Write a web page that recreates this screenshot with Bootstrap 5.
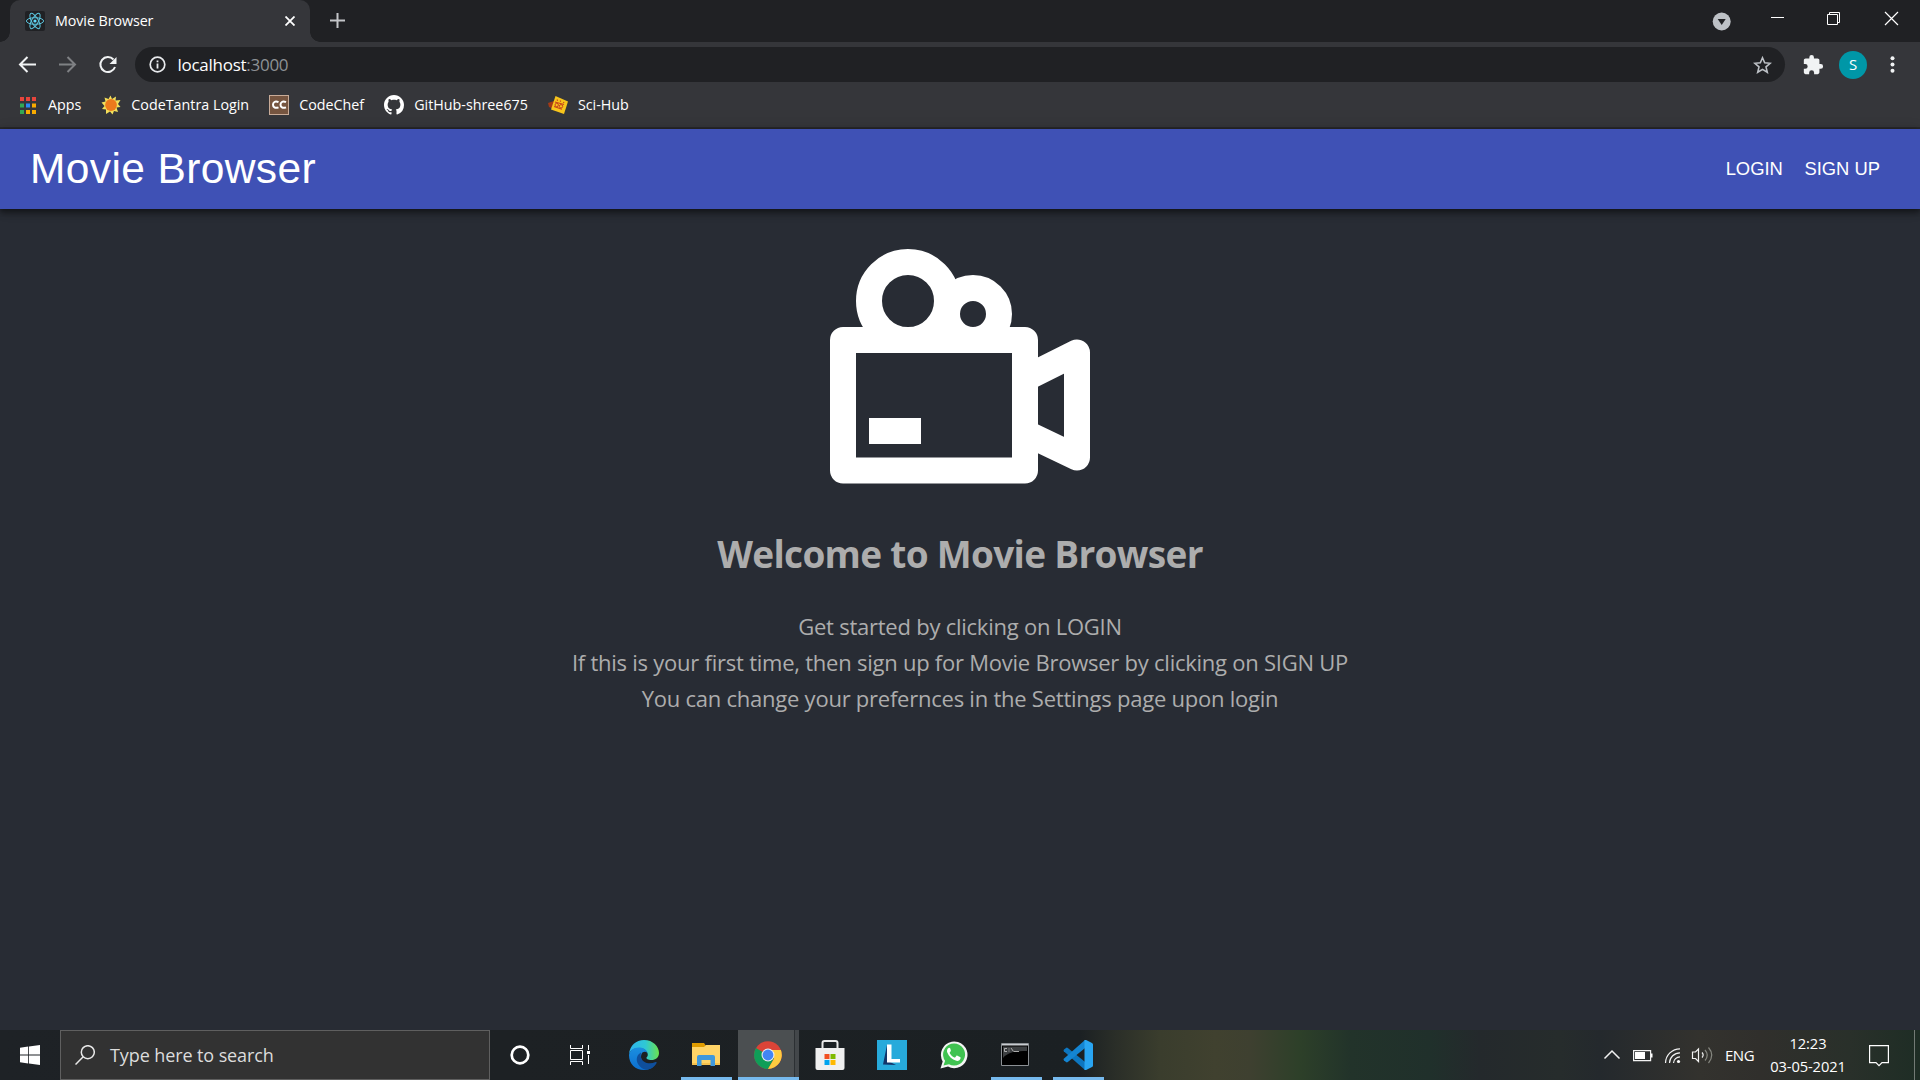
<!DOCTYPE html>
<html lang="en">
<head>
<meta charset="utf-8">
<title>Movie Browser</title>
<link href="https://cdn.jsdelivr.net/npm/bootstrap@5.3.0/dist/css/bootstrap.min.css" rel="stylesheet">
<style>
  body{width:1920px;height:1080px;overflow:hidden;background:#282c34;font-family:"Open Sans","Noto Sans",sans-serif;color:#fff}
  svg{display:block;flex:none}
  .tabstrip{height:42px;background:#202124}
  .browser-tab{width:300px;height:42px;margin-left:10px;background:#35363a;border-radius:10px 10px 0 0;padding:0 15px;position:relative}
  .browser-tab::before,.browser-tab::after{content:"";position:absolute;bottom:0;width:10px;height:10px}
  .browser-tab::before{left:-10px;background:radial-gradient(circle at 0 0,transparent 9.5px,#35363a 10px)}
  .browser-tab::after{right:-10px;background:radial-gradient(circle at 100% 0,transparent 9.5px,#35363a 10px)}
  .newtab{margin:13px 0 0 20px}
  .t-tab,.t-bm{font-size:14.3px;line-height:20px;white-space:nowrap}
  .t-tab{margin-left:10px;letter-spacing:-.08px}
  .toolbar{height:45px;background:#35363a}
  .omnibox{width:1650px;height:35px;border-radius:18px;background:#202124;padding:0 13px 0 14px}
  .t-url{font-size:17px;letter-spacing:-.27px;line-height:24px;white-space:nowrap;margin-left:11.5px}
  .t-url span{color:#8d9195}
  .bookmarks{height:42px;background:#35363a;border-bottom:2px solid #29292c;padding:0 0 4px 20px;gap:20px}
  .bm{gap:10px}
  .bm:first-child{gap:11px}
  .profile{width:28px;height:28px;background:#0097a7;font-size:15px;margin:0 23px 0 15px}
  .appbar{height:80px;background:#3f51b5;box-shadow:0 2px 5px rgba(0,0,0,.35),0 5px 6px rgba(0,0,0,.2),0 1px 12px rgba(0,0,0,.2);font-family:"Liberation Sans",Arial,sans-serif;padding:0 40px 0 30px}
  .brand{font-size:42.5px;letter-spacing:.38px;line-height:52px;white-space:nowrap;padding-bottom:1px}
  .links{gap:21.5px}
  .applink{font-size:18.4px;line-height:28px;white-space:nowrap}
  .page{height:821px;color:#adadad;padding-top:39.5px}
  .welcome{font-size:37px;font-weight:700;line-height:50px;letter-spacing:-.69px;margin:45px 0 0}
  .intro{font-size:22px;line-height:36px;letter-spacing:-.24px;margin:29.5px 0 0}
  .intro div,.welcome{white-space:nowrap}
  .taskbar{height:50px;background:linear-gradient(90deg,#1e2226 0,#1d2124 500px,#1b2023 1080px,#2a2e28 1115px,#3a3d2d 1160px,#40412f 1215px,#3e4030 1250px,#2d4029 1300px,#22332a 1350px,#20302b 1430px,#24292c 1480px,#262c2c 1560px,#24292d 1600px,#33322e 1700px,#302f2c 1760px,#29302a 1850px,#1e2d25 1920px)}
  .startbtn{width:60px}
  .searchbox{width:430px;height:50px;background:#323232;border:1px solid #5f5f5f;padding-left:14px;gap:15px}
  .t-search{font-size:18px;letter-spacing:-.1px;line-height:26px;color:#dcdcdc;white-space:nowrap}
  .slot{width:62px;height:50px;display:flex;align-items:center;justify-content:center;position:relative}
  .slot-sm{width:60px}
  .running::after{content:"";position:absolute;left:6px;bottom:0;width:51px;height:3px;background:#76b9ed}
  .active-app{background:linear-gradient(90deg,transparent 1px,#4b4f51 1px 57px,#2c3033 57px 58px,#43474a 58px)}
  .active-app.running::after{left:1px;width:61px}
  .t-lang{font-size:15px;line-height:23px;letter-spacing:-.5px;width:42px}
  .t-clock{font-size:14.7px;line-height:23px;letter-spacing:-.1px;width:82px;white-space:nowrap;text-align:center}
  .peek{width:6px;height:50px;border-left:1px solid #727a75}
</style>
</head>
<body>
<header>
  <div class="tabstrip d-flex">
    <div class="browser-tab d-flex align-items-center">
      <svg width="20" height="20" viewBox="0 0 20 20"><rect width="20" height="20" rx="2" fill="#202124"/><g fill="none" stroke="#5cc5de" stroke-width="1"><ellipse cx="10" cy="10" rx="8.6" ry="3.3"/><ellipse cx="10" cy="10" rx="8.6" ry="3.3" transform="rotate(60 10 10)"/><ellipse cx="10" cy="10" rx="8.6" ry="3.3" transform="rotate(120 10 10)"/></g><circle cx="10" cy="10" r="1.6" fill="#61dafb"/></svg>
      <span class="t-tab">Movie Browser</span>
      <svg class="ms-auto" width="10" height="10" viewBox="0 0 10 10"><path d="M.5.5l9 9M9.500.5l-9 9" stroke="#fff" stroke-width="1.8"/></svg>
    </div>
    <svg class="newtab" width="15" height="15" viewBox="0 0 15 15"><path d="M7.500 0v15M0 7.500h15" stroke="#c3c5c8" stroke-width="2"/></svg>
    <svg class="ms-auto" width="220" height="42" viewBox="1700 0 220 42"><circle cx="1721.700" cy="21.500" r="9" fill="#bdc1c6"/><path d="M1717.700 19h8l-4 6z" fill="#202124"/><g stroke="#fff" fill="none" stroke-width="1"><path d="M1771 17.500h13"/><path d="M1827.500 14.500h10v10h-10zM1829.500 14.500v-2h10v10h-2"/><path stroke-width="1.200" d="M1885 12l13 13M1898 12l-13 13"/></g></svg>
  </div>
  <div class="toolbar d-flex align-items-center">
    <svg width="135" height="45" viewBox="0 42 135 45" fill="none" stroke-width="2"><path d="M36 64.500H20M27.500 57l-7.500 7.500 7.500 7.500" stroke="#f1f3f4"/><path d="M59 64.500h16M67.500 57l7.500 7.500-7.500 7.500" stroke="#7f8184"/><path d="M113.500 59.500A7.500 7.500 0 1 0 115 67" stroke="#f1f3f4"/><path d="M116.500 57v7h-7z" fill="#f1f3f4"/></svg>
    <div class="omnibox d-flex align-items-center">
      <svg width="17" height="17" viewBox="0 0 17 17"><circle cx="8.500" cy="8.500" r="7.300" fill="none" stroke="#e8eaed" stroke-width="1.700"/><path d="M7.600 7.500h1.800v5H7.600zM7.600 4.400h1.800v1.800H7.600z" fill="#e8eaed"/></svg>
      <div class="t-url">localhost<span>:3000</span></div>
      <svg class="ms-auto" width="19" height="18" viewBox="0 0 19 18"><path d="M9.500 1.800l2.200 5 5.500.5-4.200 3.600 1.300 5.400-4.800-2.900-4.800 2.900L6 10.900 1.800 7.300l5.500-.5z" fill="none" stroke="#bdc1c6" stroke-width="1.600"/></svg>
    </div>
    <svg style="margin-left:17px" width="22" height="22" viewBox="0 0 24 24"><path fill="#f1f3f4" d="M20.500 11H19V7c0-1.100-.9-2-2-2h-4V3.500a2.500 2.500 0 0 0-5 0V5H4c-1.100 0-2 .9-2 2v3.800h1.500a2.700 2.700 0 0 1 0 5.400H2V20c0 1.100.9 2 2 2h3.800v-1.500a2.700 2.700 0 0 1 5.400 0V22H17c1.100 0 2-.9 2-2v-4h1.500a2.500 2.500 0 0 0 0-5z"/></svg>
    <div class="profile rounded-circle d-flex align-items-center justify-content-center">S</div>
    <svg width="5" height="17" viewBox="0 0 5 17" fill="#f1f3f4"><circle cx="2.500" cy="2.200" r="2"/><circle cx="2.500" cy="8.500" r="2"/><circle cx="2.500" cy="14.800" r="2"/></svg>
  </div>
  <nav class="bookmarks d-flex align-items-center">
    <div class="bm d-flex align-items-center">
      <svg width="17" height="17" viewBox="0 0 17 17"><path fill="#e8453c" d="M0 0h4v4H0zM6 0h4v4H6zM12 0h4v4h-4z"/><path fill="#34a853" d="M0 6.500h4v4H0zM0 13h4v4H0z"/><path fill="#2a8af6" d="M6 6.500h4v4H6z"/><path fill="#f9ab00" d="M12 6.500h4v4h-4zM12 13h4v4h-4zM6 13h4v4H6z"/></svg>
      <span class="t-bm">Apps</span>
    </div>
    <div class="bm d-flex align-items-center">
      <svg width="20" height="20" viewBox="0 0 20 20"><path fill="#f3df5a" d="M9.500.5l1.500 3.500 4-2.500-.5 4 5-.5L17 9l2.500 3-4 .5L17 17l-4-1-1.500 3.500L9 16.500 5 19v-4.500l-4-.5L3.500 11 .5 7.500l4-1L3.500 2.500 7.500 4z"/><circle cx="10" cy="10" r="5.900" fill="#ee7a1c"/></svg>
      <span class="t-bm">CodeTantra Login</span>
    </div>
    <div class="bm d-flex align-items-center">
      <svg width="20" height="20" viewBox="0 0 20 20"><rect x=".5" y=".5" width="19" height="19" fill="#765540" stroke="#c8ab98"/><path d="M9.500 7.200C6 5.500 4 7.500 4 9.700s2 4.100 5.500 2.600M17 7.200c-3.500-1.700-5.500.3-5.500 2.500s2 4.100 5.500 2.600" fill="none" stroke="#fff" stroke-width="2"/></svg>
      <span class="t-bm">CodeChef</span>
    </div>
    <div class="bm d-flex align-items-center">
      <svg width="20" height="20" viewBox="0 0 16 16"><path fill="#fff" d="M8 0C3.580 0 0 3.580 0 8c0 3.540 2.290 6.530 5.470 7.590.4.070.55-.17.55-.38 0-.19-.01-.82-.01-1.490-2.010.37-2.530-.49-2.690-.94-.09-.23-.48-.94-.82-1.130-.28-.15-.68-.52-.01-.53.63-.01 1.080.58 1.230.82.72 1.210 1.870.87 2.330.66.07-.52.28-.87.51-1.070-1.780-.2-3.640-.89-3.640-3.950 0-.87.31-1.590.82-2.150-.08-.2-.36-1.020.08-2.120 0 0 .67-.21 2.200.82.64-.18 1.320-.27 2-.27s1.360.09 2 .27c1.530-1.040 2.200-.82 2.200-.82.44 1.100.16 1.920.08 2.120.51.56.82 1.270.82 2.150 0 3.070-1.870 3.750-3.650 3.950.29.25.54.73.54 1.480 0 1.070-.01 1.930-.01 2.200 0 .21.15.46.55.38A8.010 8.010 0 0 0 16 8c0-4.420-3.580-8-8-8z"/></svg>
      <span class="t-bm">GitHub-shree675</span>
    </div>
    <div class="bm d-flex align-items-center">
      <svg width="20" height="20" viewBox="0 0 20 20"><path fill="#a33a16" d="M0 8l6-2v8l-5-2z"/><path fill="#f8c51c" d="M7.500 1L20 6.500 16 19 3 14.500z"/><path d="M7 7l9 2.500M6 11.500l8 2.800M9 4.500l.6 1.300M12.500 5.500v1.300M16 7l-.6 1" stroke="#c7431c" stroke-width="1.200"/><circle cx="8.700" cy="10" r="1.700" fill="none" stroke="#c7431c"/><circle cx="13" cy="11.300" r="1.700" fill="none" stroke="#c7431c"/></svg>
      <span class="t-bm">Sci-Hub</span>
    </div>
  </nav>
</header>
<div class="appbar d-flex align-items-center justify-content-between">
  <div class="brand">Movie Browser</div>
  <div class="links d-flex"><span class="applink">LOGIN</span><span class="applink">SIGN UP</span></div>
</div>
<main class="page d-flex flex-column align-items-center text-center">
  <svg width="260" height="235" viewBox="0 0 260 235"><path fill="none" stroke="#fff" stroke-width="26" stroke-linejoin="round" d="M13 91h182v130.500H13z"/><circle cx="78" cy="52" r="39" fill="none" stroke="#fff" stroke-width="26"/><circle cx="143" cy="65" r="26" fill="none" stroke="#fff" stroke-width="26"/><path fill="#fff" d="M39 169h52v26H39z"/><path fill="none" stroke="#fff" stroke-width="26" stroke-linejoin="round" d="M202 126l45-22.500v105L202 187"/></svg>
  <h1 class="welcome">Welcome to Movie Browser</h1>
  <div class="intro"><div>Get started by clicking on LOGIN</div><div>If this is your first time, then sign up for Movie Browser by clicking on SIGN UP</div><div>You can change your prefernces in the Settings page upon login</div></div>
</main>
<footer class="taskbar d-flex align-items-center">
  <div class="startbtn d-flex justify-content-center"><svg width="20" height="20" viewBox="0 0 20 20" fill="#fff"><path d="M0 2.800L8.200 1.600V9.500H0zM9 1.500L20 0v9.500H9zM0 10.400h8.200v8L0 17.300zM9 10.400h11V20L9 18.500z"/></svg></div>
  <div class="searchbox d-flex align-items-center"><svg width="20" height="20" viewBox="0 0 20 20" fill="none" stroke="#e8e8e8" stroke-width="1.500"><circle cx="12.800" cy="7.200" r="6.500"/><path d="M8.200 11.800L.5 19.500"/></svg><span class="t-search">Type here to search</span></div>
  <div class="slot slot-sm"><svg width="20" height="20" viewBox="0 0 20 20"><circle cx="10" cy="10" r="8.300" fill="none" stroke="#fff" stroke-width="2.700"/></svg></div>
  <div class="slot slot-sm"><svg width="20" height="20" viewBox="0 0 20 20" fill="none" stroke="#fff"><path d="M.5 5.500h12v9H.5zM.5 0v3.500h12V0M.5 20v-3.500h12V20M18.500 0v5M18.500 10v9"/><path fill="#fff" stroke="none" d="M17 6h3v3h-3z"/></svg></div>
  <div class="slot" style="margin-left:3px"><svg width="30" height="30" viewBox="0 0 30 30">
    <defs><linearGradient id="eg1" x1="0" x2="1"><stop offset="0" stop-color="#2eb4f0"/><stop offset=".55" stop-color="#2fc8d4"/><stop offset="1" stop-color="#6be34d"/></linearGradient><linearGradient id="eg2" x1="0" y1="0" x2="0" y2="1"><stop offset="0" stop-color="#1b8fe0"/><stop offset="1" stop-color="#0c6fd0"/></linearGradient></defs>
    <path fill="url(#eg1)" d="M0 14C1 5.500 7 0 15 0c9 0 15 6.500 15 13 0 4.500-3.500 7-7.500 7-3.500 0-5.500-1.300-5-2.500 1-1 1.500-2 1.200-3.500C18 10 14 8 10 8c-5 0-8.500 2.500-10 6z"/>
    <path fill="url(#eg2)" d="M0 15c.5-4.500 4.500-7.500 9.500-7.500 4.500 0 8.200 2 9 5.500-2-2-5-1.500-6 1-2 5 2 12 9 12l3 .5c-2.500 2-5.500 3.500-9.500 3.500C6.500 30 0 24 0 15z"/>
    <path fill="#0f4f9c" d="M12 12.500c-4 2-5.500 7-3 11.500 2 3.500 5 5.500 8.500 5.800 4.500-.3 8-3 10-6.500.5-1-.3-1.500-1-1.200-6 2.600-13 .9-14.500-4.600-.4-1.800-.4-3.500 0-5z"/></svg></div>
  <div class="slot running"><svg width="28" height="24" viewBox="0 0 28 24" style="margin-bottom:2px"><path fill="#e09c00" d="M0 1h12l2 3v4H0z"/><path fill="#ffd467" d="M0 5h12l2-2h14v20H0z"/><path fill="#f5c14d" d="M0 21h28v2H0z"/><path fill="#3f98dc" d="M5 24V15q0-2 2-2h14q2 0 2 2v9h-4.500v-6h-9v6z"/></svg></div>
  <div class="slot active-app running"><svg width="28" height="28" viewBox="0 0 28 28"><circle cx="14" cy="14" r="13.800" fill="#db4437"/><path fill="#0f9d58" d="M14 14L1.900 7A14 14 0 0 0 14 28l6-10.500z"/><path fill="#ffcd40" d="M14 9h12.900A14 14 0 0 1 14 28l6.100-10.500z"/><circle cx="14" cy="14" r="6.500" fill="#eee"/><circle cx="14" cy="14" r="5.400" fill="#4285f4"/></svg></div>
  <div class="slot"><svg width="30" height="30" viewBox="0 0 30 30"><path d="M7.500 10V3q0-2 2-2h11q2 0 2 2v7" fill="none" stroke="#e8e8e8" stroke-width="2"/><path fill="#f0f0f0" d="M.5 8h29v20q0 2-2 2h-25q-2 0-2-2z"/><path fill="#f25022" d="M9.500 14h5v5h-5z"/><path fill="#7fba00" d="M15.500 14h5v5h-5z"/><path fill="#00a4ef" d="M9.500 20h5v5h-5z"/><path fill="#ffb900" d="M15.500 20h5v5h-5z"/></svg></div>
  <div class="slot"><svg width="30" height="30" viewBox="0 0 30 30"><path fill="#27aadb" d="M0 0h30v30H0z"/><path fill="#12366b" d="M10 5L6 24.500l13 .5-8-4z"/><path fill="#fff" d="M10 4.500h4.500v14.500h8.500v3.500H10z"/></svg></div>
  <div class="slot"><svg width="28" height="28" viewBox="0 0 28 28"><path fill="#f4f4f4" d="M.5 27.500l2.200-7A13.300 13.300 0 1 1 8 25.600z"/><path fill="#40c351" d="M3.500 24.500l1.600-4.700A11 11 0 1 1 9 23.200z"/><path fill="#fff" d="M10.300 7.500c-.5-.9-1.100-.8-1.700-.5-1.500.9-2 2.700-1.300 4.600 1.500 4 4.700 7 9 8.200 1.900.5 4-.7 4.300-2.500.1-.8 0-1-.6-1.300l-2.600-1.300c-.5-.2-.8-.1-1.100.3l-1 1.300c-.3.300-.6.300-1 .1-2-.9-3.500-2.300-4.500-4.200-.2-.4-.1-.6.1-.9l.8-1.100c.2-.3.2-.6.100-.9z"/></svg></div>
  <div class="slot running"><svg width="28" height="23" viewBox="0 0 28 23" style="margin:0 2px 2px 0"><path fill="#000" stroke="#8b9094" d="M.5.500h27v22H.5z"/><path fill="#c8ccd0" d="M1 1h26v1.500H1z"/><path fill="#3c3f41" d="M2 3.500h24v4.500q-18-1-24 7z"/><path d="M6 5.500H3.500v3H6M8 5.500v1M8 7.500v1M10 5l2.500 3.500M13 8.500h5" stroke="#bbb" stroke-width=".9" fill="none"/></svg></div>
  <div class="slot running"><svg width="30" height="30" viewBox="0 0 30 30"><path fill="#0d76c0" d="M1 9.500l2-1.600q.9-.6 1.800.1L24 23.500 22 30 .8 11.300Q.1 10.300 1 9.500z"/><path fill="#1485d3" d="M1 20.500l2 1.600q.9.600 1.800-.1L24 6.500 22 0 .8 18.700q-.7 1 .2 1.800z"/><path fill="#29a5f2" d="M21.500 0q.8-.3 1.600.1l5.900 2.800q1 .5 1 1.600v21q0 1.100-1 1.600l-5.900 2.800q-.8.400-1.600.100z"/></svg></div>
  <div class="ms-auto d-flex align-items-center">
    <svg width="125" height="50" viewBox="1600 1030 125 50" fill="none" stroke="#f2f2f2" stroke-width="1.500"><path d="M1604.500 1058.500l7.500-7.500 7.500 7.500"/><path stroke-width="1.200" d="M1633.600 1050.600h17v10h-17z"/><path fill="#fff" stroke="none" d="M1635 1052h10v7h-10zM1651 1053.500h1.500v4H1651z"/><path stroke-width="1.200" d="M1665.500 1063a14.500 14.500 0 0 1 14.500-14.200M1669.500 1063a10.500 10.500 0 0 1 10.500-10.200M1673.500 1063a6.500 6.500 0 0 1 6.500-6.200"/><circle cx="1678.500" cy="1061.500" r="1.600" fill="#fff" stroke="none"/><path stroke-width="1.200" d="M1692.500 1052h3l3-3v12.500l-3-3h-3z"/><path stroke-width="1.200" d="M1702 1052.500q2.300 2.500 0 5"/><path stroke="#85867f" stroke-width="1.200" d="M1705 1050q4.500 5 0 10.500M1708.500 1047.500q6.500 7.500 0 15.500"/></svg>
    <div class="t-lang">ENG</div>
    <div class="t-clock">12:23<br>03-05-2021</div>
    <svg width="65" height="50" viewBox="1849 1030 65 50"><path d="M1869.600 1045.600h18.800v17h-6.400l-3 3-3-3h-6.400z" fill="none" stroke="#fff" stroke-width="1.200"/></svg>
    <div class="peek"></div>
  </div>
</footer>
<script src="https://cdn.jsdelivr.net/npm/bootstrap@5.3.0/dist/js/bootstrap.bundle.min.js"></script>
</body>
</html>
